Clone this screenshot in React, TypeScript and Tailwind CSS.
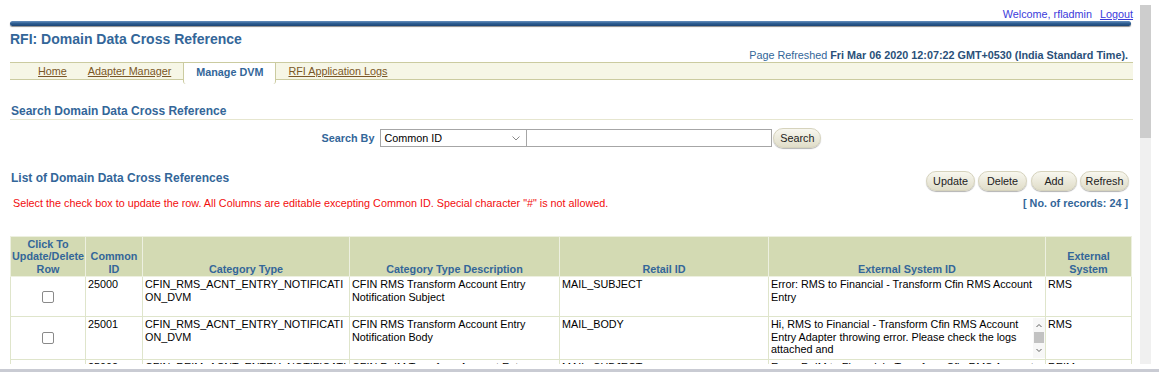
import React from "react";

function Btn({ label, w }: { label: string; w: string }) {
  return (
    <div
      className={`${w} h-[20px] rounded-full border border-[#d6d3bd] bg-linear-to-b from-[#f8f7ef] to-[#e0ddc9] shadow-[0_1px_1px_rgba(0,0,0,0.3)] flex items-center justify-center text-[10.8px] text-[#222]`}
    >
      {label}
    </div>
  );
}

function Check() {
  return (
    <div className="flex justify-center items-center">
      <div className="w-[12px] h-[12px] border border-[#8a8a8a] rounded-[2px] bg-white" />
    </div>
  );
}

const th =
  "border border-[#edf0e0] align-bottom pb-[1px] font-bold text-[#336699] text-center";
const td = "border border-[#dfe5cb] align-top pl-[2px] pt-[1px] pr-[2px]";

export default function App() {
  return (
    <div className="w-[1159px] h-[372px] overflow-hidden bg-white flex flex-col font-['Liberation_Sans',Arial,sans-serif]">
      <div className="flex h-[364px]">
        <div className="w-[1140px] h-full overflow-hidden pl-[10px] pr-[7px]">
          {/* welcome */}
          <div className="flex justify-end items-start gap-[8px] h-[21px] pt-[7px] text-[10.8px] leading-[14px] text-[#3b3bdb]">
            <span>Welcome, rfladmin</span>
            <span className="underline">Logout</span>
          </div>
          {/* blue bar */}
          <div className="h-[7px] pr-[2px]">
            <div className="h-[5px] rounded-full bg-linear-to-b from-[#6790be] via-[#2d5d91] to-[#1d4474] shadow-[0_1px_1px_#8c8c8c]" />
          </div>
          {/* title */}
          <div className="mt-[3px] leading-[16px] text-[14px] font-bold text-[#336699]">
            RFI: Domain Data Cross Reference
          </div>
          <div className="mt-[2px] leading-[13px] text-[10.8px] text-right pr-[5px] text-[#336699]">
            Page Refreshed{" "}
            <span className="font-bold text-[#2a5079]">
              Fri Mar 06 2020 12:07:22 GMT+0530 (India Standard Time).
            </span>
          </div>
          {/* tabs */}
          <div className="h-[18px] border-y border-[#cbcba0] bg-[#f6f6e6] flex items-start text-[10.8px]">
            <div className="w-[28px]" />
            <div className="h-full flex items-center underline text-[#7a5626] leading-[14px]">Home</div>
            <div className="w-[21px]" />
            <div className="h-full flex items-center underline text-[#7a5626] leading-[14px]">Adapter Manager</div>
            <div className="w-[12px]" />
            <div className="-mt-[1px] h-[22px] px-[12px] bg-white border-x border-t border-[#cbcba0] rounded-b-[3px] flex items-start pt-[2px] font-bold text-[#336699] leading-[14px]">
              Manage DVM
            </div>
            <div className="w-[12px]" />
            <div className="h-full flex items-center underline text-[#7a5626] leading-[14px]">RFI Application Logs</div>
          </div>
          {/* search heading */}
          <div className="mt-[24px] leading-[15px] text-[12px] font-bold text-[#336699] border-b border-[#e6e6cf] pl-[1px]">
            Search Domain Data Cross Reference
          </div>
          {/* search row */}
          <div className="mt-[8px] h-[20px] flex justify-center items-center">
            <span className="text-[10.8px] font-bold text-[#336699] mr-[6px]">Search By</span>
            <div className="w-[147px] h-[18px] border border-[#a6a6a6] bg-white flex items-center justify-between pl-[3px] pr-[6px] text-[10.8px] text-black">
              <span>Common ID</span>
              <svg width="8" height="5" viewBox="0 0 8 5">
                <polyline points="0.5,0.5 4,4 7.5,0.5" fill="none" stroke="#8a8a8a" strokeWidth="1" />
              </svg>
            </div>
            <div className="w-[245px] h-[18px] border border-l-0 border-[#a6a6a6] bg-white" />
            <div className="ml-[1px]">
              <Btn label="Search" w="w-[48px]" />
            </div>
          </div>
          {/* list heading + buttons */}
          <div className="mt-[20px] h-[23px] flex justify-between items-start">
            <div className="pt-[3px] leading-[15px] text-[12px] font-bold text-[#336699] pl-[1px]">
              List of Domain Data Cross References
            </div>
            <div className="mt-[3px] flex gap-[3px] pr-[4px]">
              <Btn label="Update" w="w-[49px]" />
              <Btn label="Delete" w="w-[49px]" />
              <div className="ml-[1px]">
                <Btn label="Add" w="w-[46px]" />
              </div>
              <Btn label="Refresh" w="w-[49px]" />
            </div>
          </div>
          <div className="mt-[5px] h-[14px] flex justify-between items-center text-[10.8px] leading-[14px]">
            <span className="pl-[3px] text-[#f20d0d]">
              Select the check box to update the row. All Columns are editable excepting Common ID. Special character "#" is not allowed.
            </span>
            <span className="pr-[5px] font-bold text-[#336699]">[ No. of records: 24 ]</span>
          </div>
          {/* table */}
          <table className="mt-[26px] table-fixed border-collapse w-[1121px] text-[10.8px] leading-[12.5px] text-black">
            <colgroup>
              <col className="w-[75px]" />
              <col className="w-[57px]" />
              <col className="w-[207px]" />
              <col className="w-[210px]" />
              <col className="w-[209px]" />
              <col className="w-[277px]" />
              <col className="w-[86px]" />
            </colgroup>
            <thead>
              <tr className="h-[40px] bg-[#d3dab3]">
                <th className={`${th} whitespace-nowrap`}>
                  Click To
                  <br />
                  Update/Delete
                  <br />
                  Row
                </th>
                <th className={th}>
                  Common
                  <br />
                  ID
                </th>
                <th className={th}>Category Type</th>
                <th className={th}>Category Type Description</th>
                <th className={th}>Retail ID</th>
                <th className={th}>External System ID</th>
                <th className={th}>
                  External
                  <br />
                  System
                </th>
              </tr>
            </thead>
            <tbody>
              <tr className="h-[40px]">
                <td className="border border-[#dfe5cb] align-middle">
                  <Check />
                </td>
                <td className={td}>25000</td>
                <td className={`${td} break-all`}>CFIN_RMS_ACNT_ENTRY_NOTIFICATION_DVM</td>
                <td className={td}>CFIN RMS Transform Account Entry Notification Subject</td>
                <td className={td}>MAIL_SUBJECT</td>
                <td className={td}>Error: RMS to Financial - Transform Cfin RMS Account Entry</td>
                <td className={td}>RMS</td>
              </tr>
              <tr className="h-[43px]">
                <td className="border border-[#dfe5cb] align-middle">
                  <Check />
                </td>
                <td className={td}>25001</td>
                <td className={`${td} break-all`}>CFIN_RMS_ACNT_ENTRY_NOTIFICATION_DVM</td>
                <td className={td}>CFIN RMS Transform Account Entry Notification Body</td>
                <td className={td}>MAIL_BODY</td>
                <td className="border border-[#dfe5cb] align-top p-0">
                  <div className="flex h-[41px] pl-[2px]">
                    <div className="w-[263px] pt-[1px] overflow-hidden">
                      Hi, RMS to Financial - Transform Cfin RMS Account Entry Adapter throwing error. Please check the logs attached and
                    </div>
                    <div className="w-[12px] mt-[1px] flex flex-col items-center bg-[#f7f7f7]">
                      <svg width="8" height="10" viewBox="0 0 8 10" className="mt-[3px]">
                        <polyline points="1.5,6 4,3.5 6.5,6" fill="none" stroke="#606060" strokeWidth="1" />
                      </svg>
                      <div className="w-[10px] h-[11px] bg-[#c2c2c2] mt-[1px]" />
                      <svg width="8" height="10" viewBox="0 0 8 10" className="mt-[2px]">
                        <polyline points="1.5,4 4,6.5 6.5,4" fill="none" stroke="#606060" strokeWidth="1" />
                      </svg>
                    </div>
                  </div>
                </td>
                <td className={td}>RMS</td>
              </tr>
              <tr className="h-[40px]">
                <td className="border border-[#dfe5cb] align-middle">
                  <Check />
                </td>
                <td className={td}>25002</td>
                <td className={`${td} break-all`}>CFIN_REIM_ACNT_ENTRY_NOTIFICATION_DVM</td>
                <td className={td}>CFIN ReIM Transform Account Entry Notification Subject</td>
                <td className={td}>MAIL_SUBJECT</td>
                <td className={td}>Error: ReIM to Financial - Transform Cfin RMS Account Entry</td>
                <td className={td}>REIM</td>
              </tr>
            </tbody>
          </table>
        </div>
        {/* page scrollbar */}
        <div className="w-[11px] h-full flex flex-col">
          <div className="h-[5px] bg-white" />
          <div className="h-[133px] bg-[#cdcdcd]" />
          <div className="flex-1 bg-[#f0f0f0]" />
        </div>
        <div className="flex-1 bg-white" />
      </div>
      <div className="h-[5px] bg-white" />
      <div className="h-[3px] bg-[#c9cbd3]" />
    </div>
  );
}
